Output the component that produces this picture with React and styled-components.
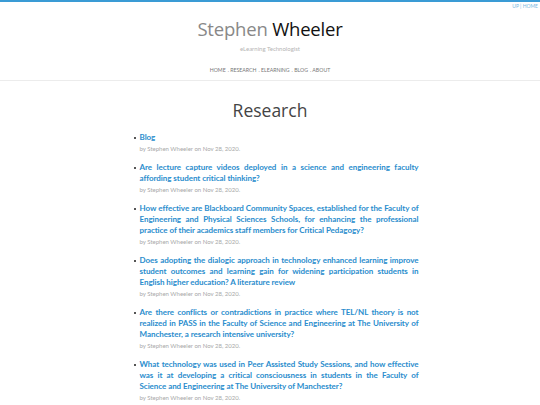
import React from "react";
import styled, { createGlobalStyle } from "styled-components";

const GlobalStyle = createGlobalStyle`
  html, body {
    margin: 0;
    padding: 0;
    background: #ffffff;
    font-family: Lato, "Open Sans", sans-serif;
  }
`;

const Page = styled.div`
  border-top: 2px solid #3a9bd5;
  min-height: 403px;
`;

const TopLinks = styled.div`
  display: flex;
  justify-content: flex-end;
  padding: 1px 2px 0 0;
  font-size: 5px;
  line-height: 6px;
  color: #7ab8e0;
  text-transform: uppercase;
`;

const Header = styled.header`
  display: flex;
  flex-direction: column;
  align-items: center;
  border-bottom: 1px solid #ececec;
  padding: 7px 0 6px;
`;

const SiteTitle = styled.h1`
  margin: 0;
  font-family: "Open Sans", sans-serif;
  font-weight: 400;
  font-size: 18.5px;
  letter-spacing: -0.2px;
  line-height: 26px;
  color: #111;
`;

const Light = styled.span`
  color: #888;
`;

const Tagline = styled.div`
  margin-top: 3px;
  font-size: 6px;
  line-height: 8px;
  color: #b5b5b5;
`;

const Nav = styled.nav`
  margin-top: 13px;
  display: flex;
  gap: 2px;
  font-size: 5.2px;
  line-height: 8px;
  color: #777;
  text-transform: uppercase;
`;

const Main = styled.main`
  box-sizing: border-box;
  width: 297px;
  margin: 0 auto;
  padding-left: 18px;
`;

const Heading = styled.h2`
  margin: 17px 0 10px -18px;
  text-align: center;
  font-family: "Open Sans", sans-serif;
  font-weight: 400;
  font-size: 17.5px;
  line-height: 24px;
  color: #444;
`;

const List = styled.ul`
  margin: 0;
  padding: 0;
  list-style: none;
  display: flex;
  flex-direction: column;
  gap: 9.5px;
`;

const Item = styled.li`
  position: relative;
  &::before {
    content: "";
    position: absolute;
    left: -6px;
    top: 5px;
    width: 2px;
    height: 2px;
    background: #555;
  }
`;

const PostLink = styled.a`
  display: block;
  font-weight: 700;
  font-size: 8px;
  letter-spacing: -0.05px;
  line-height: 11px;
  color: #2a8dcd;
  text-align: justify;
  text-decoration: none;
`;

const Meta = styled.div`
  margin-top: 1.5px;
  font-size: 6px;
  line-height: 8px;
  color: #a8a8a8;
`;

const posts = [
  "Blog",
  "Are lecture capture videos deployed in a science and engineering faculty affording student critical thinking?",
  "How effective are Blackboard Community Spaces, established for the Faculty of Engineering and Physical Sciences Schools, for enhancing the professional practice of their academics staff members for Critical Pedagogy?",
  "Does adopting the dialogic approach in technology enhanced learning improve student outcomes and learning gain for widening participation students in English higher education? A literature review",
  "Are there conflicts or contradictions in practice where TEL/NL theory is not realized in PASS in the Faculty of Science and Engineering at The University of Manchester, a research intensive university?",
  "What technology was used in Peer Assisted Study Sessions, and how effective was it at developing a critical consciousness in students in the Faculty of Science and Engineering at The University of Manchester?",
];

const navItems = ["Home", "Research", "eLearning", "Blog", "About"];

export default function App() {
  return (
    <>
      <GlobalStyle />
      <Page>
        <TopLinks>Up | Home</TopLinks>
        <Header>
          <SiteTitle>
            <Light>Stephen</Light> Wheeler
          </SiteTitle>
          <Tagline>eLearning Technologist</Tagline>
          <Nav>
            {navItems.map((n, i) => (
              <span key={n}>
                {i > 0 ? ". " : ""}
                {n}
              </span>
            ))}
          </Nav>
        </Header>
        <Main>
          <Heading>Research</Heading>
          <List>
            {posts.map((p) => (
              <Item key={p}>
                <PostLink href="#">{p}</PostLink>
                <Meta>by Stephen Wheeler on Nov 28, 2020.</Meta>
              </Item>
            ))}
          </List>
        </Main>
      </Page>
    </>
  );
}
